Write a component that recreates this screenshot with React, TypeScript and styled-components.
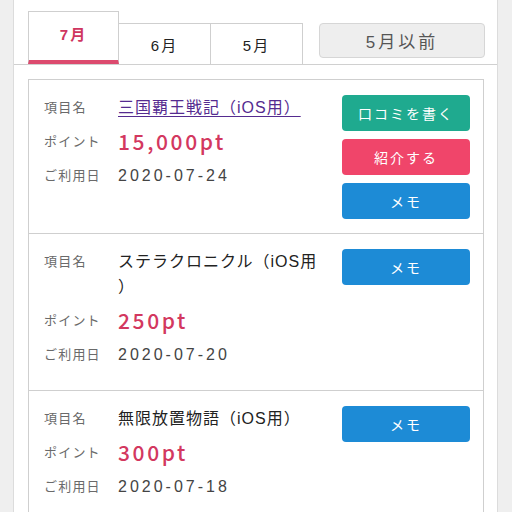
import React from "react";
import styled, { createGlobalStyle } from "styled-components";

const GlobalStyle = createGlobalStyle`
  html, body { margin: 0; padding: 0; background: #efefef; }
  body { font-family: "Liberation Sans", "Noto Sans CJK JP", sans-serif; }
  * { box-sizing: border-box; }
`;

const Panel = styled.div`
  margin-left: 13px;
  width: 485px;
  min-height: 512px;
  background: #fff;
  border-left: 1px solid #dcdcdc;
  border-right: 1px solid #dcdcdc;
`;

const TabBar = styled.div`
  display: flex;
  align-items: flex-start;
  padding: 11px 0 0 14px;
  border-bottom: 1px solid #d0d0d0;
`;

const Tab = styled.div<{ $active?: boolean; $first?: boolean; $w: number }>`
  width: ${(p) => p.$w}px;
  height: ${(p) => (p.$active ? 53 : 41)}px;
  margin-top: ${(p) => (p.$active ? 0 : 12)}px;
  display: flex;
  align-items: center;
  justify-content: center;
  border: 1px solid #cfcfcf;
  border-left: ${(p) => (p.$first ? "1px solid #cfcfcf" : "none")};
  border-bottom: ${(p) => (p.$active ? "4px solid #dc4a6e" : "none")};
  padding-bottom: ${(p) => (p.$active ? 6 : 0)}px;
  font-size: 15px;
  letter-spacing: 2px;
  color: ${(p) => (p.$active ? "#cf3560" : "#222")};
  font-weight: ${(p) => (p.$active ? 700 : 400)};
`;

const PastButton = styled.div`
  margin-left: auto;
  margin-right: 12px;
  margin-top: 12px;
  width: 166px;
  height: 35px;
  display: flex;
  align-items: center;
  justify-content: center;
  background: #eeeeee;
  border: 1px solid #d6d6d6;
  border-radius: 4px;
  color: #555;
  font-size: 17px;
  letter-spacing: 3px;
`;

const List = styled.div`
  margin: 14px 13px 0 14px;
  border: 1px solid #cfcfcf;
  border-bottom: none;
`;

const Item = styled.div`
  display: flex;
  gap: 17px;
  padding: 15px 13px 14px 15px;
  & + & {
    border-top: 1px solid #cfcfcf;
  }
`;

const Info = styled.div`
  width: 281px;
`;

const Row = styled.div`
  display: flex;
  margin-bottom: 9px;
  line-height: 25px;
`;

const Label = styled.div`
  width: 74px;
  flex-shrink: 0;
  font-size: 13px;
  letter-spacing: 1.2px;
  color: #6a6a6a;
`;

const Value = styled.div`
  width: 207px;
  font-size: 16px;
  letter-spacing: 1px;
  color: #222;
  line-break: anywhere;
`;

const Link = styled.a`
  color: #552b90;
  text-decoration: underline;
  text-underline-offset: 3px;
  text-decoration-thickness: 1px;
  padding-right: 8px;
`;

const Points = styled.div`
  font-family: "Noto Sans CJK JP", sans-serif;
  font-size: 21px;
  letter-spacing: 2.6px;
  color: #d3385f;
  font-weight: 500;
`;

const DateText = styled.div`
  font-size: 16px;
  letter-spacing: 3px;
  color: #444;
`;

const Actions = styled.div`
  width: 128px;
  display: flex;
  flex-direction: column;
  gap: 8px;
`;

const ActionButton = styled.div<{ $color: string }>`
  height: 36px;
  border-radius: 4px;
  background: ${(p) => p.$color};
  color: #fff;
  font-size: 14px;
  letter-spacing: 2px;
  display: flex;
  align-items: center;
  justify-content: center;
`;

const GREEN = "#1faa8f";
const RED = "#f0456a";
const BLUE = "#1d8bd6";

type Entry = {
  name: string;
  link?: boolean;
  points: string;
  date: string;
  full?: boolean;
};

const entries: Entry[] = [
  { name: "三国覇王戦記（iOS用）", link: true, points: "15,000pt", date: "2020-07-24", full: true },
  { name: "ステラクロニクル（iOS用）", points: "250pt", date: "2020-07-20" },
  { name: "無限放置物語（iOS用）", points: "300pt", date: "2020-07-18" },
];

export default function App() {
  return (
    <>
      <GlobalStyle />
      <Panel>
        <TabBar>
          <Tab $active $first $w={91}>7月</Tab>
          <Tab $w={92}>6月</Tab>
          <Tab $w={92}>5月</Tab>
          <PastButton>5月以前</PastButton>
        </TabBar>
        <List>
          {entries.map((e) => (
            <Item key={e.date}>
              <Info>
                <Row>
                  <Label>項目名</Label>
                  <Value>{e.link ? <Link href="#">{e.name}</Link> : e.name}</Value>
                </Row>
                <Row>
                  <Label>ポイント</Label>
                  <Points>{e.points}</Points>
                </Row>
                <Row>
                  <Label>ご利用日</Label>
                  <DateText>{e.date}</DateText>
                </Row>
              </Info>
              <Actions>
                {e.full && <ActionButton $color={GREEN}>口コミを書く</ActionButton>}
                {e.full && <ActionButton $color={RED}>紹介する</ActionButton>}
                <ActionButton $color={BLUE}>メモ</ActionButton>
              </Actions>
            </Item>
          ))}
        </List>
      </Panel>
    </>
  );
}
